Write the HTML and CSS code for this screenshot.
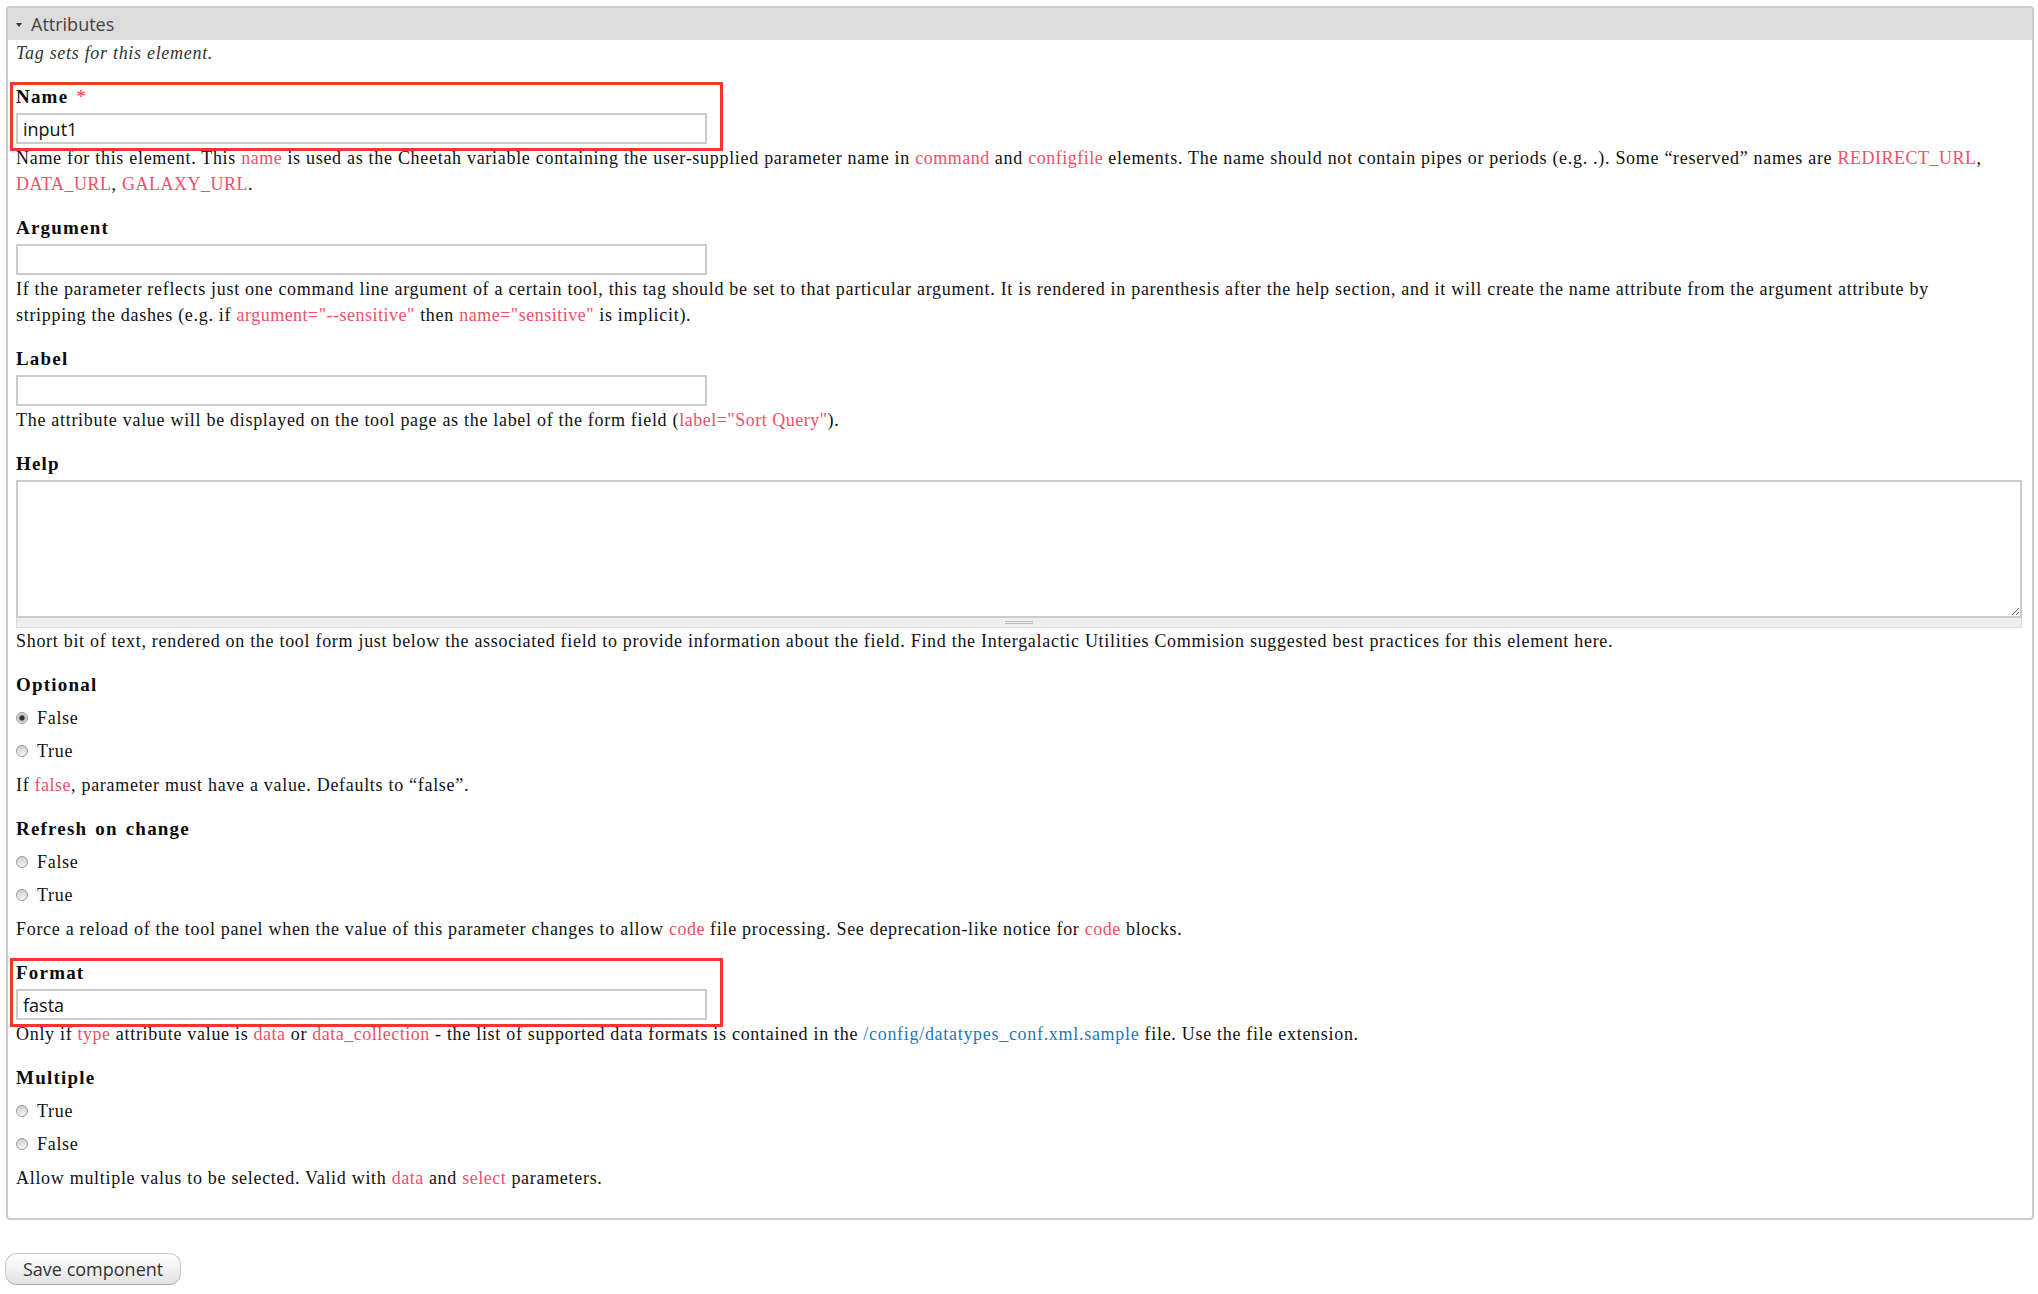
FILE: index.html
```html
<!DOCTYPE html>
<html lang="en">
<head>
    <meta charset="UTF-8">
    <title>Attributes</title>
    <link rel="stylesheet" href="styles.css">
</head>
<body>
    <form class="page">
        <div class="panel">
            <div class="panel-header">
                <span class="toggle"></span>
                Attributes
            </div>
            <div class="panel-body">
                <p class="intro">Tag sets for this element.</p>

                <div class="form-item">
                    <div class="marked">
                        <label class="field-label" for="attr-name">Name <span class="required">*</span></label>
                        <input class="text-input" type="text" id="attr-name" value="input1">
                    </div>
                    <div class="description">Name for this element. This <code>name</code> is used as the Cheetah variable containing the user-supplied parameter name in <code>command</code> and <code>configfile</code> elements. The name should not contain pipes or periods (e.g. .). Some “reserved” names are <code>REDIRECT_URL</code>, <code>DATA_URL</code>, <code>GALAXY_URL</code>.</div>
                </div>

                <div class="form-item">
                    <label class="field-label" for="attr-argument">Argument</label>
                    <input class="text-input" type="text" id="attr-argument">
                    <div class="description">If the parameter reflects just one command line argument of a certain tool, this tag should be set to that particular argument. It is rendered in parenthesis after the help section, and it will create the name attribute from the argument attribute by stripping the dashes (e.g. if <code>argument="--sensitive"</code> then <code>name="sensitive"</code> is implicit).</div>
                </div>

                <div class="form-item">
                    <label class="field-label" for="attr-label">Label</label>
                    <input class="text-input" type="text" id="attr-label">
                    <div class="description">The attribute value will be displayed on the tool page as the label of the form field (<code>label="Sort Query"</code>).</div>
                </div>

                <div class="form-item">
                    <label class="field-label" for="attr-help">Help</label>
                    <textarea class="text-area" id="attr-help"></textarea>
                    <div class="grippie"></div>
                    <div class="description">Short bit of text, rendered on the tool form just below the associated field to provide information about the field. Find the Intergalactic Utilities Commision suggested best practices for this element here.</div>
                </div>

                <div class="form-item">
                    <div class="field-label">Optional</div>
                    <div class="radios">
                        <label class="radio"><input type="radio" name="optional" checked> False</label>
                        <label class="radio"><input type="radio" name="optional"> True</label>
                    </div>
                    <div class="description">If <code>false</code>, parameter must have a value. Defaults to “false”.</div>
                </div>

                <div class="form-item">
                    <div class="field-label">Refresh on change</div>
                    <div class="radios">
                        <label class="radio"><input type="radio" name="refresh"> False</label>
                        <label class="radio"><input type="radio" name="refresh"> True</label>
                    </div>
                    <div class="description">Force a reload of the tool panel when the value of this parameter changes to allow <code>code</code> file processing. See deprecation-like notice for <code>code</code> blocks.</div>
                </div>

                <div class="form-item">
                    <div class="marked">
                        <label class="field-label" for="attr-format">Format</label>
                        <input class="text-input" type="text" id="attr-format" value="fasta">
                    </div>
                    <div class="description">Only if <code>type</code> attribute value is <code>data</code> or <code>data_collection</code> - the list of supported data formats is contained in the <a href="#">/config/datatypes_conf.xml.sample</a> file. Use the file extension.</div>
                </div>

                <div class="form-item">
                    <div class="field-label">Multiple</div>
                    <div class="radios">
                        <label class="radio"><input type="radio" name="multiple"> True</label>
                        <label class="radio"><input type="radio" name="multiple"> False</label>
                    </div>
                    <div class="description">Allow multiple valus to be selected. Valid with <code>data</code> and <code>select</code> parameters.</div>
                </div>
            </div>
        </div>

        <div class="actions">
            <button type="button" class="button">Save component</button>
        </div>
    </form>
</body>
</html>
```
FILE: styles.css
```css
:root {
    --text: #111111;
    --code: #f04f68;
    --link: #1f78b4;
    --border: #cccccc;
    --marker: #f3372a;
    --sans: 'Open Sans', 'DejaVu Sans', sans-serif;
}

* {
    box-sizing: border-box;
}

html, body {
    margin: 0;
    padding: 0;
    background: #ffffff;
}

body {
    font-family: 'Liberation Serif', 'Times New Roman', serif;
    font-size: 18px;
    line-height: 26px;
    letter-spacing: 0.7px;
    color: var(--text);
}

.page {
    margin: 0;
    padding: 6px 4px 0 0;
}

/* collapsible fieldset */
.panel {
    margin-left: 6px;
    border: 2px solid var(--border);
    border-radius: 4px;
    padding-bottom: 27px;
}

.panel-header {
    height: 32px;
    display: flex;
    align-items: center;
    gap: 9px;
    padding-left: 8px;
    background: #dcdcdc;
    font-family: var(--sans);
    font-size: 18px;
    letter-spacing: normal;
    color: #444444;
}

.toggle {
    width: 0;
    height: 0;
    border-left: 3px solid transparent;
    border-right: 3px solid transparent;
    border-top: 4px solid #333333;
    margin-top: 2px;
}

.panel-body {
    padding: 0 10px 0 8px;
}

.intro {
    margin: 0;
    font-style: italic;
    color: #333333;
}

.form-item {
    margin-top: 18px;
}

.field-label {
    display: block;
    font-size: 19px;
    font-weight: bold;
    letter-spacing: 1.2px;
    word-spacing: 2px;
    color: #0c0c0c;
}

.required {
    color: #ff3340;
    font-weight: normal;
}

.marked {
    position: relative;
    width: 691px;
}

/* red annotation frame drawn over the field */
.marked::after {
    content: '';
    position: absolute;
    top: -2px;
    left: -6px;
    right: -16px;
    bottom: -7px;
    border: 3px solid var(--marker);
    pointer-events: none;
}

.text-input {
    display: block;
    width: 691px;
    height: 31px;
    margin: 3px 0 1px;
    padding: 0 5px;
    border: 2px solid var(--border);
    font-family: var(--sans);
    font-size: 18px;
    letter-spacing: normal;
    color: #111111;
    background: #ffffff;
    outline: none;
}

.text-area {
    display: block;
    width: 100%;
    height: 138px;
    margin-top: 3px;
    padding: 4px 5px;
    border: 2px solid var(--border);
    font-family: var(--sans);
    font-size: 16px;
    resize: vertical;
    outline: none;
}

.grippie {
    height: 10px;
    background: #eeeeee;
    border: 1px solid #dddddd;
    border-top: none;
    display: flex;
    justify-content: center;
    align-items: center;
}

.grippie::before {
    content: '';
    width: 28px;
    height: 4px;
    background: repeating-linear-gradient(#bbbbbb 0 1px, transparent 1px 2px);
}

.description {
    padding-right: 30px;
    color: var(--text);
}

code {
    font-family: inherit;
    font-size: inherit;
    letter-spacing: 0.5px;
    color: var(--code);
}

a {
    color: var(--link);
    text-decoration: none;
}

.radios {
    padding-bottom: 1px;
}

.radio {
    display: flex;
    align-items: center;
    margin-top: 7px;
    color: #111111;
}

.radios + .description {
    margin-top: 7px;
}

.radio input {
    appearance: none;
    -webkit-appearance: none;
    width: 12px;
    height: 12px;
    margin: 0 9px 0 0;
    border: 1px solid #999999;
    border-radius: 50%;
    background: linear-gradient(#d0d0d0, #f4f4f4);
}

.radio input:checked {
    background: radial-gradient(circle, #333333 0 2px, #b0b0b0 3px, #ececec 5px);
}

.actions {
    padding: 33px 0 0 5px;
}

.button {
    height: 32px;
    padding: 0 17px;
    border: 1px solid #c6c6c6;
    border-bottom-color: #aeaeae;
    border-radius: 12px;
    background: linear-gradient(#ffffff, #e3e3e3);
    font-family: var(--sans);
    font-size: 18px;
    letter-spacing: normal;
    color: #333333;
    cursor: pointer;
}
```
